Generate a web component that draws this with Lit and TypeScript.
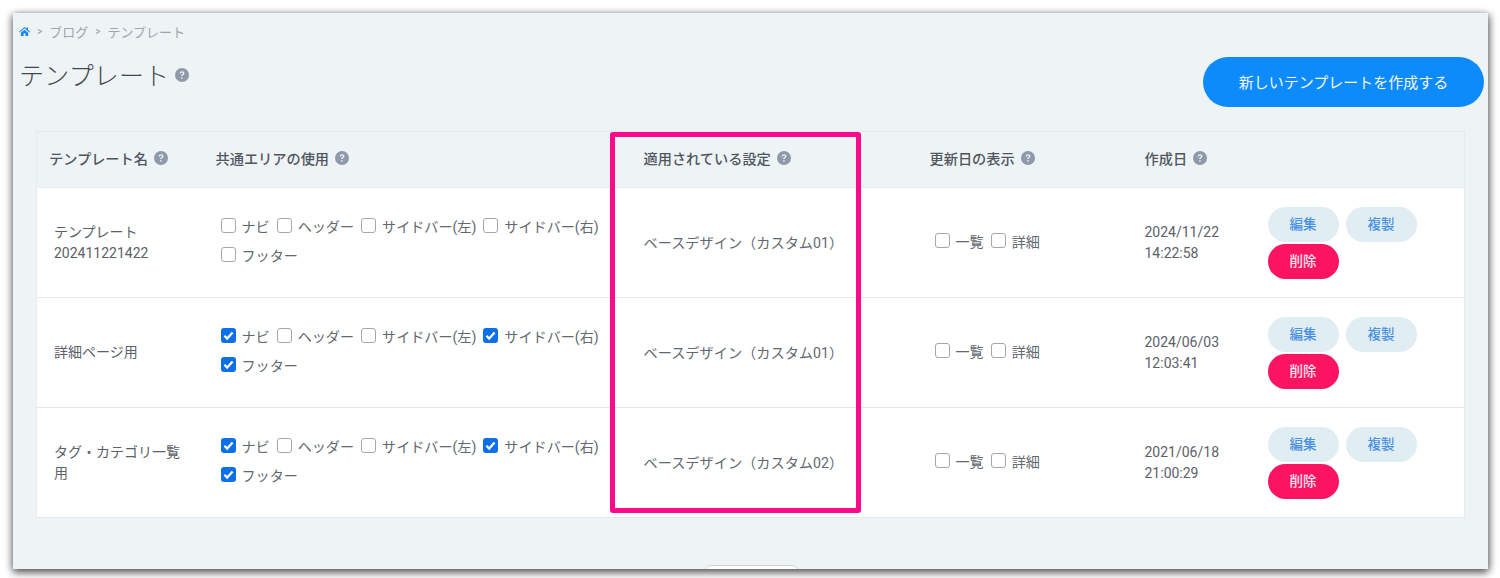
import { LitElement, html, css } from "lit";
import { customElement } from "lit/decorators.js";

const AREAS = ["ナビ", "ヘッダー", "サイドバー(左)", "サイドバー(右)", "フッター"];
const ROWS = [
  { name: "テンプレート", sub: "202411221422", on: [0,0,0,0,0], setting: "ベースデザイン（カスタム01）", d: "2024/11/22", t: "14:22:58" },
  { name: "詳細ページ用", sub: "", on: [1,0,0,1,1], setting: "ベースデザイン（カスタム01）", d: "2024/06/03", t: "12:03:41" },
  { name: "タグ・カテゴリ一覧用", sub: "", on: [1,0,0,1,1], setting: "ベースデザイン（カスタム02）", d: "2021/06/18", t: "21:00:29" },
];

const help = html`<svg class="help" viewBox="0 0 14 14"><circle cx="7" cy="7" r="7" fill="#8e99aa"/><path d="M4.7 5.4c0-1.4 1-2.2 2.4-2.2s2.3.8 2.3 2c0 1-.6 1.4-1.2 1.8-.5.3-.7.5-.7 1.1H6.2c0-1 .3-1.5 1-1.9.5-.3.8-.5.8-1 0-.4-.4-.8-1-.8s-1 .4-1 1Z" fill="#eef3f6"/><rect x="6.2" y="9.1" width="1.4" height="1.5" fill="#eef3f6"/></svg>`;

@customElement("app-root")
export class AppRoot extends LitElement {
  static styles = css`
    :host { display: block; height: 578px; box-sizing: border-box; padding: 13px 12px 9px 13px; background: #fff; overflow: hidden;
      font-family: Roboto, "Noto Sans CJK JP", sans-serif; color: #555b63; }
    .panel { height: 556px; box-sizing: border-box; background: #eef3f6; overflow: hidden; padding: 10px 4px 0 6px;
      box-shadow: 0 5px 7px rgba(0,0,0,.38), -3px 1px 7px rgba(0,0,0,.22), 3px 1px 7px rgba(0,0,0,.3), 0 -1px 5px rgba(0,0,0,.06); }
    .crumbs { display: flex; align-items: center; height: 16px; font-size: 13px; color: #9ea5ae; gap: 6px; }
    .sep { font-size: 10px; color: #8c939c; padding: 0 1px; }
    .home { width: 11px; height: 11px; }
    .head { display: flex; justify-content: space-between; align-items: flex-start; height: 81px; }
    .title { display: flex; align-items: center; margin: 17px 0 0 0; height: 36px; font-size: 25px; font-weight: 300; color: #42484f; gap: 6px; letter-spacing: .2px; }
    .title .help { width: 14px; height: 14px; margin-top: 2px; }
    .create { border: 0; margin-top: 18px; width: 281px; height: 50px; border-radius: 25px; background: #0d8bfb; color: #f2f8ff; font: 400 15px Roboto, "Noto Sans CJK JP", sans-serif; padding: 0 0 2px; }
    .tablewrap { position: relative; margin: 11px 20px 0 17px; }
    table { border-collapse: collapse; table-layout: fixed; width: 1428px; background: #fff; }
    .c1 { width: 167px; } .c2 { width: 428px; } .c3 { width: 286px; } .c4 { width: 215px; } .c5 { width: 124px; } .c6 { width: 208px; }
    th { height: 56px; box-sizing: border-box; background: #eef3f6; text-align: left; font-size: 14.2px; font-weight: 500; color: #50565e; padding: 0 0 4px 12px; border: 1px solid #e6ebee; border-width: 1px 0; }
    th .help { width: 14px; height: 14px; margin-left: 6px; vertical-align: -1px; }
    th:first-child { border-left: 1px solid #e6ebee; }
    th:last-child { border-right: 1px solid #e6ebee; }
    td { height: 110px; box-sizing: border-box; font-size: 14px; color: #5b6168; padding: 0 0 0 12px; border-bottom: 1px solid #e6e9eb; }
    td:first-child { border-left: 1px solid #e6ebee; padding-left: 17px; line-height: 21px; }
    td:last-child { border-right: 1px solid #e6ebee; }
    td.name { padding-right: 20px; }
    td.areas { padding-left: 17px; padding-bottom: 4px; }
    td.setting { font-size: 14.2px; color: #62686f; padding-bottom: 2px; }
    td.dates { font-size: 14px; line-height: 21px; }
    .list { display: flex; flex-wrap: wrap; gap: 7px 7px; }
    .chk { display: inline-flex; align-items: center; gap: 6px; height: 22px; font-size: 14.1px; color: #62686f; white-space: nowrap; }
    .box { width: 15px; height: 15px; box-sizing: border-box; border: 1.5px solid #a6a6a6; border-radius: 3px; background: #fff; flex: none; display: block; margin-top: -1px; }
    .box.on { border: 0; background: #0d70e8; }
    td.views { padding-left: 17px; padding-bottom: 4px; }
    .btns { display: flex; flex-wrap: wrap; gap: 2px 7px; width: 160px; margin-left: -1px; }
    .btn { width: 71px; height: 35px; border-radius: 18px; border: 0; background: #e0edf2; color: #4a90e2; font: 500 13.5px Roboto, "Noto Sans CJK JP", sans-serif; padding: 0 0 3px; }
    .btn.del { background: #fb1461; color: #ffe9f0; }
    .mark { position: absolute; left: 574px; top: 1px; width: 251px; height: 381px; box-sizing: border-box; border: 5.5px solid #fb0a8c; border-radius: 3px; pointer-events: none; }
    .more { margin: 47px 0 0 686px; width: 93px; height: 30px; box-sizing: border-box; background: #fff; border: 1px solid #cfd3d6; border-radius: 6px; }
  `;

  box(on: boolean) {
    return on
      ? html`<svg class="box on" viewBox="0 0 15 15"><path d="M3.4 7.7 6.2 10.6 11.6 4.6" fill="none" stroke="#fff" stroke-width="2.2"/></svg>`
      : html`<span class="box"></span>`;
  }

  render() {
    return html`<div class="panel">
      <nav class="crumbs">
        <svg class="home" viewBox="0 0 12 12"><path d="M6 1 0 6.2l.7.8L6 2.5 11.3 7l.7-.8L9.8 4.3V1.6H8.3v1.4ZM2 7.4V11h3V8h2v3h3V7.4L6 4Z" fill="#1487f5"/></svg>
        <span class="sep">&gt;</span><span>ブログ</span><span class="sep">&gt;</span><span>テンプレート</span>
      </nav>
      <div class="head">
        <h1 class="title">テンプレート${help}</h1>
        <button class="create">新しいテンプレートを作成する</button>
      </div>
      <div class="tablewrap">
        <table>
          <colgroup><col class="c1"><col class="c2"><col class="c3"><col class="c4"><col class="c5"><col class="c6"></colgroup>
          <thead><tr>
            <th>テンプレート名${help}</th><th>共通エリアの使用${help}</th><th>適用されている設定${help}</th><th>更新日の表示${help}</th><th>作成日${help}</th><th></th>
          </tr></thead>
          <tbody>
            ${ROWS.map((r) => html`<tr>
              <td class="name">${r.name}${r.sub ? html`<br>${r.sub}` : ""}</td>
              <td class="areas"><div class="list">${AREAS.map((a, i) => html`<label class="chk">${this.box(!!r.on[i])}${a}</label>`)}</div></td>
              <td class="setting">${r.setting}</td>
              <td class="views"><div class="list"><label class="chk">${this.box(false)}一覧</label><label class="chk">${this.box(false)}詳細</label></div></td>
              <td class="dates">${r.d}<br>${r.t}</td>
              <td><div class="btns"><button class="btn">編集</button><button class="btn">複製</button><button class="btn del">削除</button></div></td>
            </tr>`)}
          </tbody>
        </table>
        <div class="mark"></div>
      </div>
      <div class="more"></div>
    </div>`;
  }
}
